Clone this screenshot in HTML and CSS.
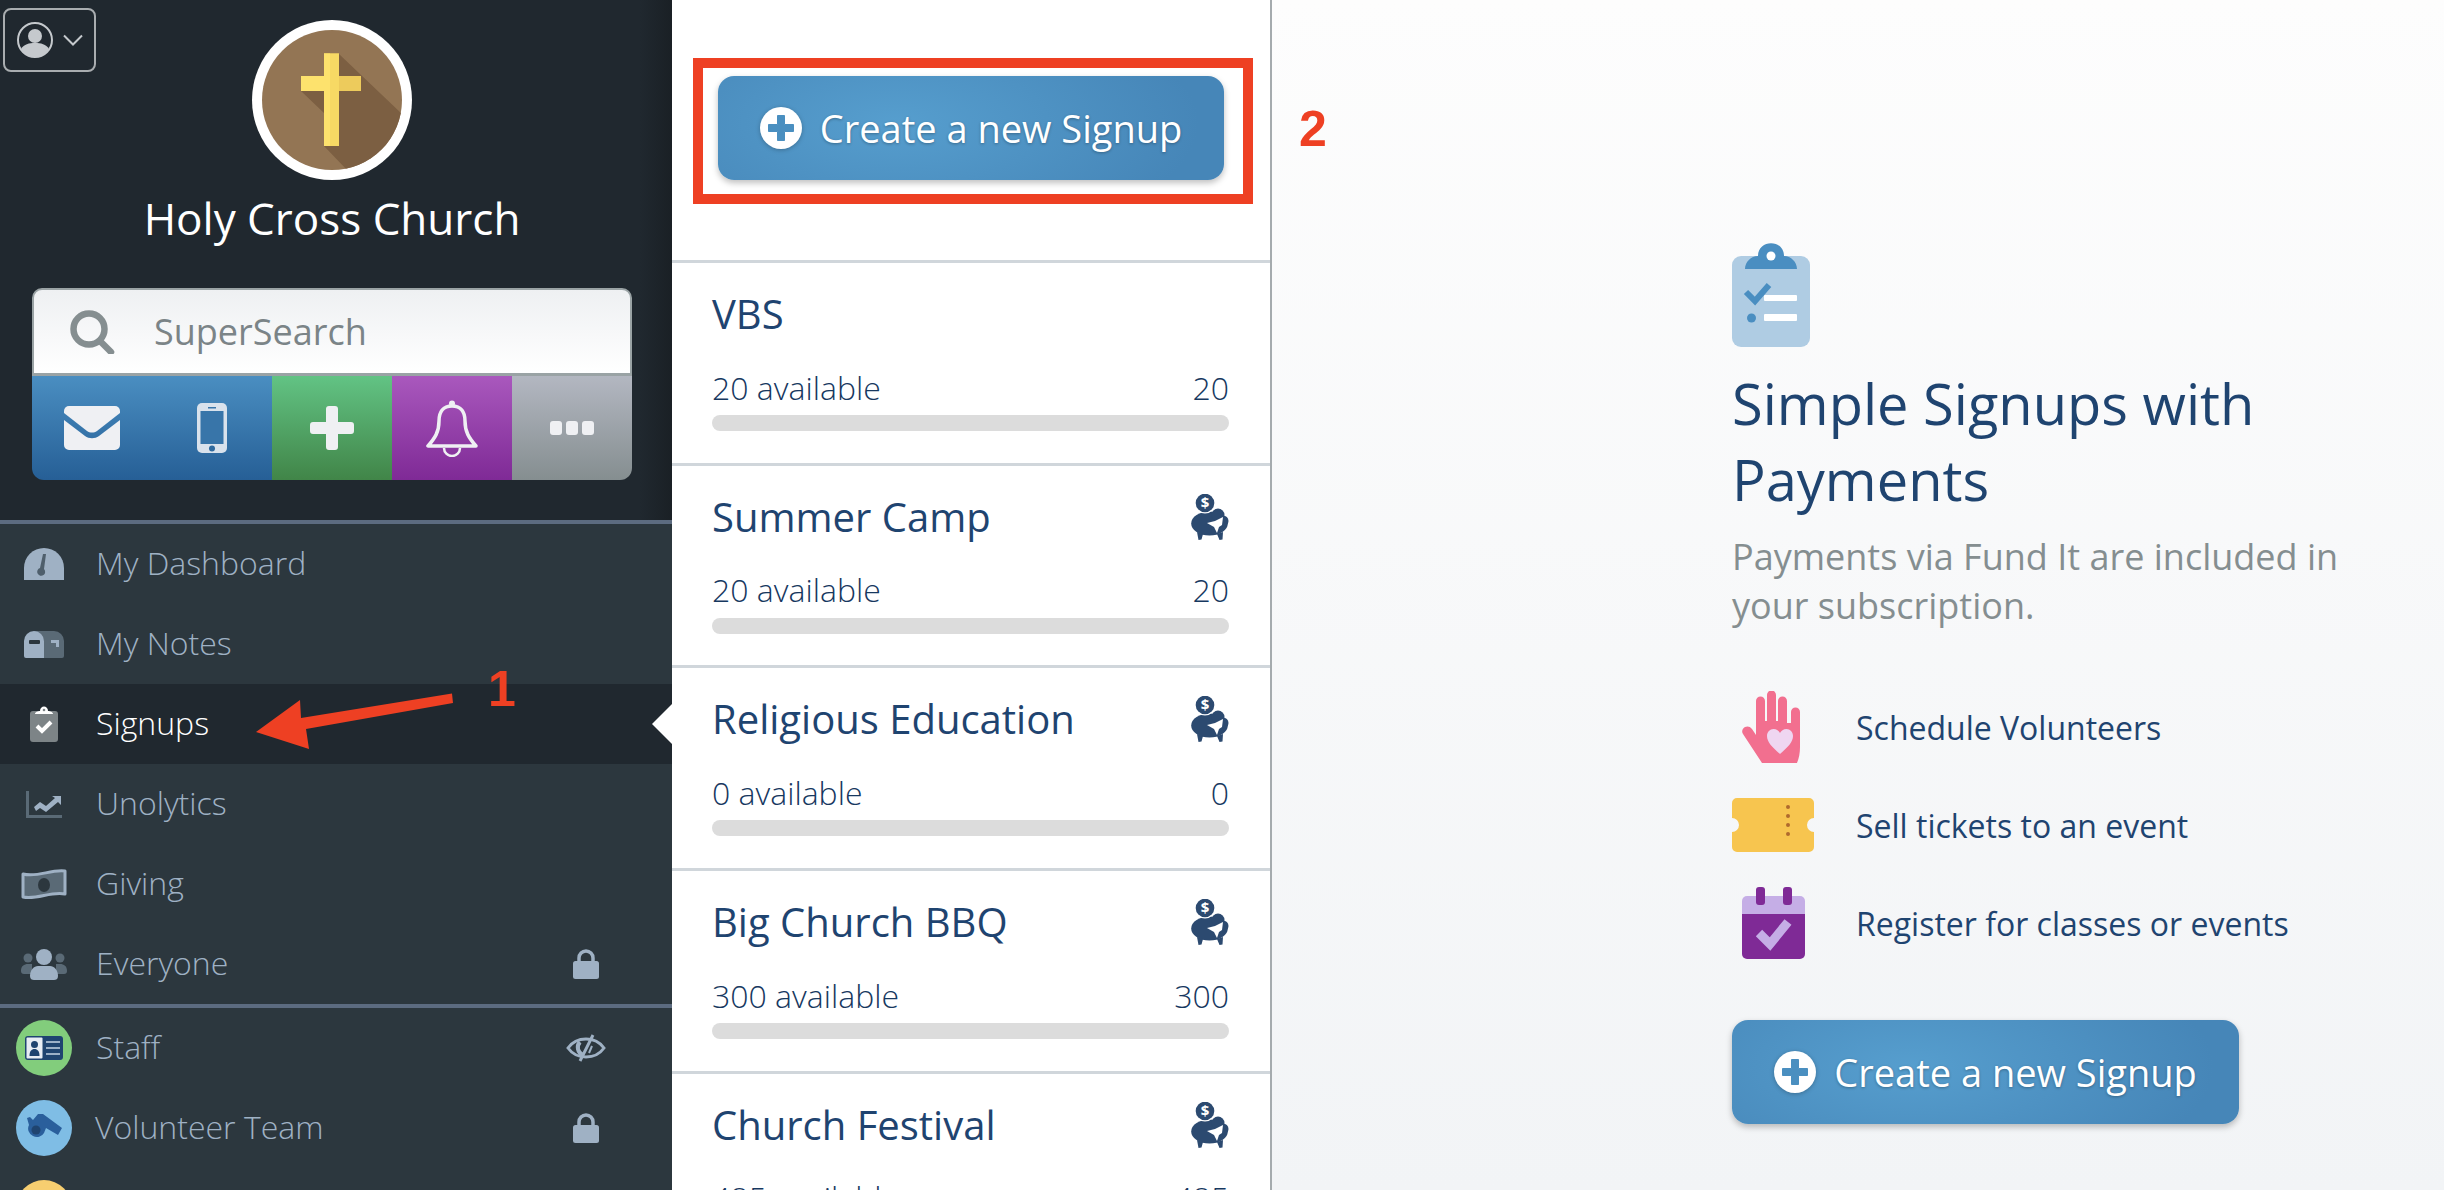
FILE: index.html
```html
<!DOCTYPE html>
<html lang="en">
<head>
<meta charset="utf-8">
<title>Signups</title>
<link rel="stylesheet" href="styles.css">
</head>
<body>
<svg class="defs" width="0" height="0" aria-hidden="true">
  <defs>
    <clipPath id="logo-clip"><circle cx="80" cy="80" r="70"/></clipPath>
    <symbol id="piggy" viewBox="0 0 38 46">
      <ellipse cx="18.500" cy="29.500" rx="18.300" ry="12" fill="#2c4a70"/>
      <circle cx="27" cy="21" r="6.500" fill="#2c4a70"/>
      <circle cx="32" cy="27" r="5.500" fill="#2c4a70"/>
      <path d="M6 38l6 2-1.500 5.500-3 .5zM26 40l6-2-.5 7.500-3 .5z" fill="#2c4a70"/>
      <path d="M16 29l8-2 8-4-1 8-3 2-2 6-3-6z" fill="#fff"/>
      <circle cx="14" cy="9" r="10.500" fill="#fff"/>
      <circle cx="14" cy="9" r="9.300" fill="#2c4a70"/>
      <text x="14" y="14" class="dollar" text-anchor="middle">$</text>
    </symbol>
    <symbol id="lock" viewBox="0 0 26 30">
      <path d="M6 13V9a7 7 0 0 1 14 0v4" fill="none" stroke="#9fb1c4" stroke-width="3.500"/>
      <rect y="12" width="26" height="18" rx="2.500" fill="#9fb1c4"/>
    </symbol>
    <symbol id="plus-circle" viewBox="0 0 42 42">
      <circle cx="21" cy="21" r="21" fill="#fff"/>
      <path d="M17.500 8.500h7v9h9v7h-9v9h-7v-9h-9v-7h9z" fill="#4a8fc0" stroke="#4a8fc0" stroke-width="1" stroke-linejoin="round"/>
    </symbol>
  </defs>
</svg>

<div class="app">
  <aside class="sidebar">
    <header class="brand">
      <button class="user-menu" type="button" aria-label="Account">
        <svg width="36" height="36" viewBox="0 0 36 36"><circle cx="18" cy="18" r="17" fill="none" stroke="#c5c9cd" stroke-width="2"/><circle cx="18" cy="14" r="7" fill="#c5c9cd"/><path d="M4 27c3-5 8-6 14-6s11 1 14 6c-3 5-8 8-14 8S7 32 4 27z" fill="#c5c9cd"/></svg>
        <svg width="20" height="12" viewBox="0 0 20 12"><path d="M1 1.500l9 9 9-9" fill="none" stroke="#c5c9cd" stroke-width="2"/></svg>
      </button>
      <svg class="logo" width="160" height="160" viewBox="0 0 160 160">
        <circle cx="80" cy="80" r="80" fill="#fff"/>
        <circle cx="80" cy="80" r="70" fill="#937554"/>
        <path clip-path="url(#logo-clip)" d="M87 34l63 60v56H95l-23-24V93L49 71l38-15z" fill="#7c5f42"/>
        <path d="M72 33.500h15v22.500h22v15H87v55H72V71H49V56h23z" fill="#edcb5c"/>
        <path d="M49 56h38v15H49z" fill="#fde26d"/>
        <path d="M72 33.500h15v92.500H72z" fill="#f7d964"/>
        <path d="M72 33.500h6v92.500h-6z" fill="#fde26d"/>
      </svg>
      <h1 class="church-name">Holy Cross Church</h1>
      <div class="search-card">
        <div class="search-field">
          <svg width="46" height="44" viewBox="0 0 46 44"><circle cx="20" cy="19" r="15.500" fill="none" stroke="#858e90" stroke-width="6.500"/><path d="M31 31l11 11" stroke="#858e90" stroke-width="6.500" stroke-linecap="round"/></svg>
          <span class="search-label">SuperSearch</span>
        </div>
        <div class="quick-actions">
          <a class="quick quick-blue">
            <svg width="56" height="44" viewBox="0 0 56 44"><path d="M0 5a5 5 0 0 1 5-5h46a5 5 0 0 1 5 5v2L33 25c-3 2-7 2-10 0L0 7z" fill="#eff0f3"/><path d="M0 14l21 16c4 3 10 3 14 0l21-16v25a5 5 0 0 1-5 5H5a5 5 0 0 1-5-5z" fill="#eff0f3"/></svg>
          </a>
          <a class="quick quick-blue">
            <svg width="30" height="50" viewBox="0 0 30 50"><rect width="30" height="50" rx="5" fill="#d9e2ec"/><rect x="3.500" y="8" width="23" height="33" fill="#3875a9"/><rect x="11" y="4" width="8" height="1.500" fill="#3875a9"/><circle cx="15" cy="45.500" r="3" fill="#2f6a9e"/></svg>
          </a>
          <a class="quick quick-green">
            <svg width="44" height="44" viewBox="0 0 44 44"><path d="M19 0h6a3 3 0 0 1 3 3v13h13a3 3 0 0 1 3 3v6a3 3 0 0 1-3 3H28v13a3 3 0 0 1-3 3h-6a3 3 0 0 1-3-3V28H3a3 3 0 0 1-3-3v-6a3 3 0 0 1 3-3h13V3a3 3 0 0 1 3-3z" fill="#eff0f3"/></svg>
          </a>
          <a class="quick quick-purple">
            <svg width="52" height="57" viewBox="0 0 52 57"><path d="M26 6c-9 0-13 6-13 15 0 11-4 17-11 25h48c-7-8-11-14-11-25 0-9-4-15-13-15z" fill="none" stroke="#eff0f3" stroke-width="3.500" stroke-linejoin="round"/><circle cx="26" cy="3.500" r="3" fill="#eff0f3"/><path d="M18 48a8 8 0 0 0 16 0" fill="none" stroke="#eff0f3" stroke-width="2.500"/></svg>
          </a>
          <a class="quick quick-grey">
            <svg width="44" height="14" viewBox="0 0 44 14"><rect width="12" height="14" rx="3" fill="#eff0f3"/><rect x="16" width="12" height="14" rx="3" fill="#eff0f3"/><rect x="32" width="12" height="14" rx="3" fill="#eff0f3"/></svg>
          </a>
        </div>
      </div>
    </header>

    <nav class="nav">
      <a class="nav-item">
        <span class="nav-icon"><svg width="40" height="32" viewBox="0 0 40 32"><path d="M0 32v-12a20 20 0 0 1 40 0v12z" fill="#9fb1c4" /><path d="M22 6l-2 15a4 4 0 1 1-4-1l3-14z" fill="#4f5f6c"/></svg></span>
        <span class="nav-label">My Dashboard</span>
      </a>
      <a class="nav-item">
        <span class="nav-icon"><svg width="40" height="27" viewBox="0 0 40 27"><path d="M10 0h20a10 10 0 0 1 10 10v15a2 2 0 0 1-2 2H20V10z" fill="#5a6a76"/><path d="M10 0a10 10 0 0 1 10 10v17H2a2 2 0 0 1-2-2V10A10 10 0 0 1 10 0z" fill="#9fb1c4"/><rect x="5" y="9" width="11" height="4" rx="1" fill="#2c373e"/><path d="M27 9h8v7h-3v-4h-5z" fill="#9fb1c4"/></svg></span>
        <span class="nav-label">My Notes</span>
      </a>
      <a class="nav-item is-active">
        <span class="nav-icon"><svg width="28" height="36" viewBox="0 0 28 36"><rect y="5" width="28" height="31" rx="3" fill="#7d8487"/><path d="M5 8c0-2 3-3 5-3 0-6 8-6 8 0 2 0 5 1 5 3z" fill="#fff"/><circle cx="14" cy="4" r="1.300" fill="#7d8487"/><path d="M7 20l5 5 9-9" fill="none" stroke="#fff" stroke-width="4"/></svg></span>
        <span class="nav-label">Signups</span>
      </a>
      <a class="nav-item">
        <span class="nav-icon"><svg width="36" height="27" viewBox="0 0 36 27"><path d="M0 0h3v24h33v3H0z" fill="#5a6a76"/><path d="M8 16l6-5 6 4 9-8-3-2h9v9l-3-3-12 10-6-4-4 3z" fill="#9fb1c4"/></svg></span>
        <span class="nav-label">Unolytics</span>
      </a>
      <a class="nav-item">
        <span class="nav-icon"><svg width="46" height="31" viewBox="0 0 46 31"><path d="M2 5c14 4 28-5 42-3v23c-14-3-28 6-42 3z" fill="#5a6a76" stroke="#9fb1c4" stroke-width="3" stroke-linejoin="round"/><ellipse cx="23" cy="16" rx="6" ry="7" fill="#2c373e"/></svg></span>
        <span class="nav-label">Giving</span>
      </a>
      <a class="nav-item">
        <span class="nav-icon"><svg width="46" height="31" viewBox="0 0 46 31"><circle cx="7" cy="9" r="4.500" fill="#5a6a76"/><circle cx="39" cy="9" r="4.500" fill="#5a6a76"/><path d="M0 22c0-5 3-7 7-7h4v10H3c-2 0-3-1-3-3zM46 22c0-5-3-7-7-7h-4v10h8c2 0 3-1 3-3z" fill="#5a6a76"/><circle cx="23" cy="8" r="8" fill="#9fb1c4"/><path d="M9 27c0-6 4-10 8-10h12c4 0 8 4 8 10 0 3-2 4-4 4H13c-2 0-4-1-4-4z" fill="#9fb1c4"/></svg></span>
        <span class="nav-label">Everyone</span>
        <svg class="nav-end nav-lock" width="26" height="30"><use href="#lock"/></svg>
      </a>
    </nav>

    <nav class="nav nav-groups">
      <a class="nav-item">
        <span class="nav-icon"><span class="group-dot dot-green"><svg width="38" height="24" viewBox="0 0 38 24"><rect width="38" height="24" rx="3" fill="#1f4470"/><rect x="1.500" y="1.500" width="16" height="21" rx="1" fill="#e8edf4"/><circle cx="9.500" cy="8.500" r="3.500" fill="#1f4470"/><path d="M4.500 20c0-5 2-7 5-7s5 2 5 7z" fill="#1f4470"/><path d="M21 6h14M21 12h14M21 18h14" stroke="#c5d3e3" stroke-width="1.500"/></svg></span></span>
        <span class="nav-label">Staff</span>
        <svg class="nav-end" width="40" height="28" viewBox="0 0 40 28"><path d="M2 14C7 7 13 5 20 5s13 2 18 9c-5 7-11 9-18 9S7 21 2 14z" fill="none" stroke="#9fb1c4" stroke-width="3"/><path d="M14 8a8 8 0 0 0 3 13" fill="none" stroke="#9fb1c4" stroke-width="4"/><path d="M27 1L14 27" stroke="#9fb1c4" stroke-width="3"/><path d="M26 12l-3 7" stroke="#9fb1c4" stroke-width="2"/></svg>
      </a>
      <a class="nav-item">
        <span class="nav-icon"><span class="group-dot dot-blue"><svg width="36" height="28" viewBox="0 0 36 28"><path d="M12 0l5 0 19 14-4 7-12-7-2 5a8 8 0 0 1-11 3A8 8 0 0 1 3 11L1 4l3-1 3 3z" fill="#2a5f9c"/><circle cx="10" cy="16" r="4.500" fill="#1f4470"/></svg></span></span>
        <span class="nav-label nav-label-tight">Volunteer Team</span>
        <svg class="nav-end nav-lock" width="26" height="30"><use href="#lock"/></svg>
      </a>
      <a class="nav-item">
        <span class="nav-icon"><span class="group-dot dot-yellow"></span></span>
      </a>
    </nav>
  </aside>

  <section class="list">
    <div class="list-head">
      <a class="cta">
        <svg width="42" height="42"><use href="#plus-circle"/></svg>
        <span>Create a new Signup</span>
      </a>
    </div>
    <article class="signup">
      <div class="signup-top"><h2 class="signup-title">VBS</h2></div>
      <div class="signup-stats"><span>20 available</span><span>20</span></div>
      <div class="bar"></div>
    </article>
    <article class="signup">
      <div class="signup-top"><h2 class="signup-title">Summer Camp</h2><svg width="38" height="46"><use href="#piggy"/></svg></div>
      <div class="signup-stats"><span>20 available</span><span>20</span></div>
      <div class="bar"></div>
    </article>
    <article class="signup">
      <div class="signup-top"><h2 class="signup-title">Religious Education</h2><svg width="38" height="46"><use href="#piggy"/></svg></div>
      <div class="signup-stats"><span>0 available</span><span>0</span></div>
      <div class="bar"></div>
    </article>
    <article class="signup">
      <div class="signup-top"><h2 class="signup-title">Big Church BBQ</h2><svg width="38" height="46"><use href="#piggy"/></svg></div>
      <div class="signup-stats"><span>300 available</span><span>300</span></div>
      <div class="bar"></div>
    </article>
    <article class="signup">
      <div class="signup-top"><h2 class="signup-title">Church Festival</h2><svg width="38" height="46"><use href="#piggy"/></svg></div>
      <div class="signup-stats"><span>485 available</span><span>485</span></div>
      <div class="bar"></div>
    </article>
  </section>

  <main class="promo">
    <svg class="promo-icon" width="78" height="104" viewBox="0 0 78 104">
      <rect y="13" width="78" height="91" rx="9" fill="#afcce3"/>
      <path d="M13 26c0-7 6-13 13-13 0-17 26-17 26 0 7 0 13 6 13 13z" fill="#4a8ec1"/>
      <circle cx="39" cy="13" r="4.500" fill="#fff"/>
      <path d="M14 49l9 9 14-16" fill="none" stroke="#4a8ec1" stroke-width="6"/>
      <rect x="32" y="52" width="33" height="6" rx="1" fill="#fff"/>
      <circle cx="19.500" cy="75" r="4.500" fill="#4a8ec1"/>
      <rect x="32" y="71" width="33" height="7" rx="1" fill="#fff"/>
    </svg>
    <h2 class="promo-title">Simple Signups with Payments</h2>
    <p class="promo-sub">Payments via Fund It are included in your subscription.</p>
    <ul class="features">
      <li class="feature">
        <span class="feature-icon"><svg width="63" height="72" viewBox="0 0 63 72"><path d="M14 10a4.500 4.500 0 0 1 9 0v20h2V4a4.500 4.500 0 0 1 9 0v26h2V10a4.500 4.500 0 0 1 9 0v22h4V21a4.500 4.500 0 0 1 9 0v35c0 6-1 11-3 16H20L1 43c-2-3 0-6 2-7 2-1 5-1 7 2l4 6z" fill="#f26f8f"/><path d="M38 63c-8-7-13-12-13-18 0-4 3-7 6.500-7 3 0 5.500 2 6.500 4 1-2 3.500-4 6.500-4 3.500 0 6.500 3 6.500 7 0 6-5 11-13 18z" fill="#efd6f1"/></svg></span>
        <span>Schedule Volunteers</span>
      </li>
      <li class="feature">
        <span class="feature-icon"><svg width="82" height="54" viewBox="0 0 82 54"><path d="M5 0h72a5 5 0 0 1 5 5v15a7 7 0 0 0 0 14v15a5 5 0 0 1-5 5H5a5 5 0 0 1-5-5V34a7 7 0 0 0 0-14V5a5 5 0 0 1 5-5z" fill="#f7c54f"/><path d="M56 9v36" stroke="#b06a2d" stroke-width="4" stroke-linecap="round" stroke-dasharray="0 9"/></svg></span>
        <span>Sell tickets to an event</span>
      </li>
      <li class="feature">
        <span class="feature-icon"><svg width="63" height="72" viewBox="0 0 63 72"><path d="M5 9h53a5 5 0 0 1 5 5v14H0V14a5 5 0 0 1 5-5z" fill="#c5aee6"/><path d="M0 27h63v40a5 5 0 0 1-5 5H5a5 5 0 0 1-5-5z" fill="#7f2a96"/><rect x="14" width="9" height="18" rx="3" fill="#7f2a96"/><rect x="41" width="9" height="18" rx="3" fill="#7f2a96"/><path d="M17 46l11 11 18-22" fill="none" stroke="#c5aee6" stroke-width="9"/></svg></span>
        <span>Register for classes or events</span>
      </li>
    </ul>
    <a class="cta">
      <svg width="42" height="42"><use href="#plus-circle"/></svg>
      <span>Create a new Signup</span>
    </a>
  </main>
</div>

<div class="note-box"></div>
<span class="note-num note-one">1</span>
<span class="note-num note-two">2</span>
<svg class="note-arrow" width="198" height="56" viewBox="0 -2 198 56"><path d="M0 37L44 5l1 18 151-24.600L197 8 50 34l3 20z" fill="#ee4023"/></svg>
</body>
</html>
```

FILE: styles.css
```css
* { box-sizing: border-box; }
html, body { margin: 0; height: 100%; overflow: hidden; }
body { font-family: "Open Sans", "Liberation Sans", sans-serif; position: relative; background: #fff; }
.defs { position: absolute; }
h1, h2, p, ul { margin: 0; padding: 0; font-weight: 400; }
ul { list-style: none; }

.app { display: flex; height: 1190px; overflow: hidden; }

/* Sidebar */
.sidebar { flex: 0 0 672px; background: #2c373e; display: flex; flex-direction: column; overflow: hidden; }
.brand {
  position: relative; flex: none; height: 520px; padding: 20px 8px 0 0;
  display: flex; flex-direction: column; align-items: center;
  background: linear-gradient(90deg, #20282f 0, #20282f 640px, #1a2025 672px);
}
.user-menu {
  position: absolute; left: 3px; top: 8px; width: 93px; height: 64px;
  display: flex; align-items: center; justify-content: center; gap: 10px;
  background: none; border: 2px solid #a9adb0; border-radius: 8px; padding: 0;
}
.logo { display: block; flex: none; }
.church-name { font-size: 44px; line-height: 60px; margin-top: 8px; color: #fff; }
.search-card { flex: none; width: 600px; height: 192px; margin-top: 40px; display: flex; flex-direction: column; }
.search-field {
  height: 88px; flex: none; display: flex; align-items: center; padding-left: 35px; gap: 39px;
  background: linear-gradient(180deg, #eef0f2, #fff);
  border: 2px solid #9aa3a5; border-bottom-width: 3px; border-radius: 10px 10px 0 0;
}
.search-label { font-size: 36px; color: #7b8487; }
.quick-actions { flex: 1; display: grid; grid-template-columns: repeat(5, 120px); border-radius: 0 0 12px 12px; overflow: hidden; }
.quick { display: flex; align-items: center; justify-content: center; }
.quick-blue { background: linear-gradient(180deg, #4a8ec1, #265f96); }
.quick-green { background: linear-gradient(180deg, #62c384, #418548); }
.quick-purple { background: linear-gradient(180deg, #a958bd, #7f2a96); }
.quick-grey { background: linear-gradient(180deg, #b3b7c1, #858e90); }

.nav { flex: none; border-top: 4px solid #5c6b80; }
.nav-item { position: relative; height: 80px; display: flex; align-items: center; padding-right: 66px; color: #9fb1c4; }
.nav-icon { flex: 0 0 88px; margin-right: 8px; display: flex; align-items: center; justify-content: center; }
.nav-label { font-size: 32px; font-weight: 300; padding-bottom: 3px; }
.nav-label-tight { margin-left: -1px; }
.nav-end { margin-left: auto; }
.nav-lock { margin-right: 7px; }
.is-active { background: #20282f; color: #fff; }
.is-active::after {
  content: ""; position: absolute; right: 0; top: 20px;
  border-style: solid; border-width: 20px 20px 20px 0; border-color: transparent #fff transparent transparent;
}
.group-dot { width: 56px; height: 56px; border-radius: 50%; display: flex; align-items: center; justify-content: center; }
.dot-green { background: #82cd7c; }
.dot-blue { background: #7fbde5; }
.dot-yellow { background: #f7ce70; }

/* Middle list */
.list { flex: 0 0 600px; background: #fff; border-right: 2px solid #a5abae; overflow: hidden; }
.list-head { height: 260px; padding: 76px 0 0 46px; }
.cta {
  display: flex; align-items: center; justify-content: center; gap: 18px;
  width: 506px; height: 104px; border-radius: 16px;
  background: radial-gradient(ellipse 60% 120% at 35% 45%, #569ece, #4686b8);
  box-shadow: 0 3px 6px rgba(0, 0, 0, .25);
  color: #fff; font-size: 38px; text-shadow: 0 1px 3px rgba(0, 0, 0, .3);
}
.cta svg { filter: drop-shadow(0 1px 2px rgba(0, 0, 0, .25)); }
.signup { height: 202.700px; border-top: 3px solid #d0d6db; padding: 25px 41px 0 40px; color: #1f4470; }
.signup-top { height: 52px; display: flex; align-items: center; justify-content: space-between; }
.signup-title { font-size: 40px; line-height: 52px; }
.dollar { font-size: 15px; font-weight: 700; fill: #fff; font-family: "Open Sans", sans-serif; }
.signup-stats { margin-top: 26px; height: 42px; display: flex; justify-content: space-between; align-items: center; font-size: 32px; font-weight: 300; color: #17385f; }
.bar { margin-top: 7px; height: 16px; border-radius: 8px; background: #dcdcdc; }

/* Promo */
.promo { flex: 1; padding: 243px 0 0 460px; background: linear-gradient(180deg, #fdfdfd, #f2f4f6); }
.promo-icon { display: block; }
.promo-title { width: 600px; margin-top: 18px; font-size: 56px; line-height: 76px; color: #1f4470; }
.promo-sub { width: 620px; margin-top: 15px; font-size: 36px; line-height: 49px; color: #858e90; }
.features { margin-top: 48px; }
.feature { height: 98px; display: flex; align-items: center; gap: 42px; font-size: 32px; color: #1f4470; }
.feature-icon { flex: 0 0 82px; display: flex; justify-content: center; }
.promo .cta { margin-top: 48px; width: 507px; }

/* Annotations laid over the screenshot */
.note-box { position: absolute; left: 693px; top: 58px; width: 560px; height: 146px; border: 10px solid #ee4023; }
.note-num { position: absolute; font-family: "Liberation Sans", sans-serif; font-weight: 700; font-size: 50px; line-height: 50px; color: #ee4023; }
.note-one { left: 488px; top: 664px; }
.note-two { left: 1299px; top: 104px; }
.note-arrow { position: absolute; left: 256px; top: 693px; overflow: visible; }
```
